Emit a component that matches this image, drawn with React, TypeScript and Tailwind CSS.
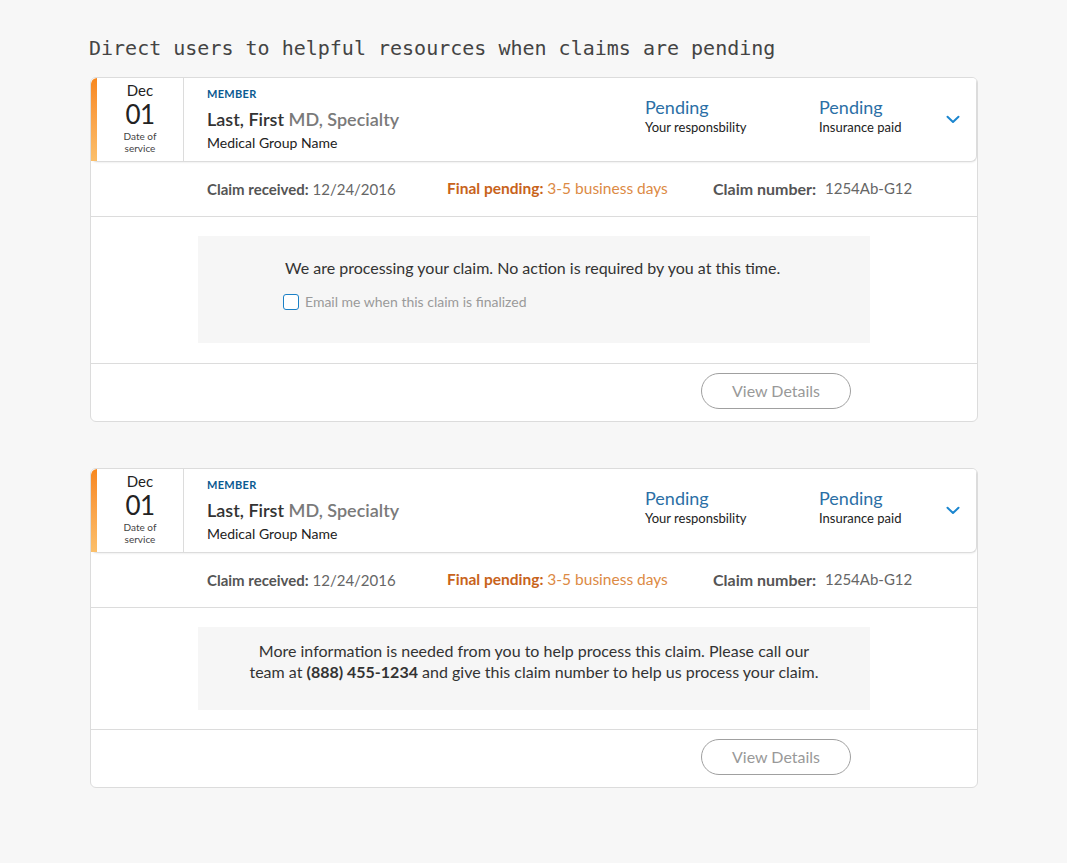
import React from 'react';

type Claim = {
    message: React.ReactNode;
    showEmail: boolean;
};

const claims: Claim[] = [
    {
        message: <p className="ml-[2px]">We are processing your claim. No action is required by you at this time.</p>,
        showEmail: true,
    },
    {
        message: (
            <p>
                More information is needed from you to help process this claim. Please call our
                <br />
                team at <span className="font-bold text-[#333]">(888) 455-1234</span> and give this claim number to help us process your claim.
            </p>
        ),
        showEmail: false,
    },
];

function ClaimCard({ claim }: { claim: Claim }) {
    return (
        <div className="w-[888px] bg-white border border-[#dcdcdc] rounded-md overflow-hidden">
            {/* header */}
            <div className="flex h-[84px] border-b border-r border-[#dcdcdc] rounded-b-md shadow-[0_1px_2px_rgba(0,0,0,0.06)] bg-white">
                <div className="w-[6px] rounded-tl-md bg-gradient-to-b from-[#f7871c] to-[#fbbf6a]"></div>
                <div className="w-[87px] border-r border-[#dcdcdc] flex flex-col items-center pt-[3px] text-[#222]">
                    <span className="text-[15px] leading-[18px]">Dec</span>
                    <span className="text-[26px] leading-[31px] tracking-[-0.5px]">01</span>
                    <span className="text-[10px] leading-[12px] text-[#444] text-center">
                        Date of
                        <br />
                        service
                    </span>
                </div>
                <div className="flex-1 pl-[23px] pt-[9px]">
                    <div className="text-[11px] leading-[14px] font-bold text-[#0b5a91] tracking-[0.3px]">MEMBER</div>
                    <div className="text-[18px] leading-[22px] mt-[7px] font-semibold text-[#333]">
                        Last, First <span className="text-[#7a7a7a]">MD, Specialty</span>
                    </div>
                    <div className="text-[14px] leading-[17px] mt-[4px] text-[#222]">Medical Group Name</div>
                </div>
                <div className="w-[174px] pt-[18px]">
                    <div className="text-[18px] leading-[22px] text-[#2b6fa6]">Pending</div>
                    <div className="text-[13px] leading-[17px] mt-[1px] text-[#222]">Your responsbility</div>
                </div>
                <div className="w-[127px] pt-[18px]">
                    <div className="text-[18px] leading-[22px] text-[#2b6fa6]">Pending</div>
                    <div className="text-[13px] leading-[17px] mt-[1px] text-[#222]">Insurance paid</div>
                </div>
                <div className="w-[30px] flex items-center">
                    <svg width="14" height="9" viewBox="0 0 14 9" fill="none">
                        <path d="M1.5 1.8 L7 7 L12.5 1.8" stroke="#1b86cf" strokeWidth="2" strokeLinecap="round" strokeLinejoin="round" />
                    </svg>
                </div>
            </div>

            {/* details */}
            <div className="flex items-center h-[55px] border-b border-[#dcdcdc] pl-[116px] text-[15px]">
                <div className="w-[240px] text-[#666]">
                    <span className="font-bold text-[#555]">Claim received:</span> 12/24/2016
                </div>
                <div className="w-[266px] text-[#dc8a44] text-[15.5px]">
                    <span className="font-bold text-[#c8631b]">Final pending:</span> 3-5 business days
                </div>
                <div className="flex text-[#666]">
                    <span className="w-[112px] font-bold text-[#555] text-[16px]">Claim number:</span>
                    <span>1254Ab-G12</span>
                </div>
            </div>

            {/* message */}
            {claim.showEmail ? (
                <div className="border-b border-[#dcdcdc] px-[107px] pt-[19px] pb-[20px]">
                    <div className="bg-[#f6f6f6] h-[107px] pt-[22px] pl-[85px] text-[16px] leading-[20px] text-[#333]">
                        {claim.message}
                        <label className="flex items-center gap-[6px] mt-[14px] text-[14px] text-[#9a9a9a]">
                            <span className="w-[16px] h-[16px] border border-[#1b80c6] rounded-[3px] bg-white"></span>
                            Email me when this claim is finalized
                        </label>
                    </div>
                </div>
            ) : (
                <div className="border-b border-[#dcdcdc] px-[107px] pt-[19px] pb-[19px]">
                    <div className="bg-[#f6f6f6] h-[83px] pt-[13px] text-center text-[16px] leading-[21px] text-[#333]">
                        {claim.message}
                    </div>
                </div>
            )}

            {/* footer */}
            <div className="flex justify-end h-[57px] pr-[126px] pt-[9px]">
                <button className="w-[150px] h-[36px] rounded-full border border-[#a0a0a0] text-[16px] text-[#999] bg-white">
                    View Details
                </button>
            </div>
        </div>
    );
}

export default function App() {
    return (
        <div className="min-h-[863px] bg-[#f7f7f7] pl-[90px] pt-[35px] font-['Lato','Open_Sans',sans-serif]">
            <h1 className="font-['DejaVu_Sans_Mono','Liberation_Mono',monospace] text-[20px] leading-[26px] text-[#444] -ml-[1px] mb-[16px]">
                Direct users to helpful resources when claims are pending
            </h1>
            <div className="flex flex-col gap-[46px]">
                {claims.map((c, i) => (
                    <ClaimCard key={i} claim={c} />
                ))}
            </div>
        </div>
    );
}
